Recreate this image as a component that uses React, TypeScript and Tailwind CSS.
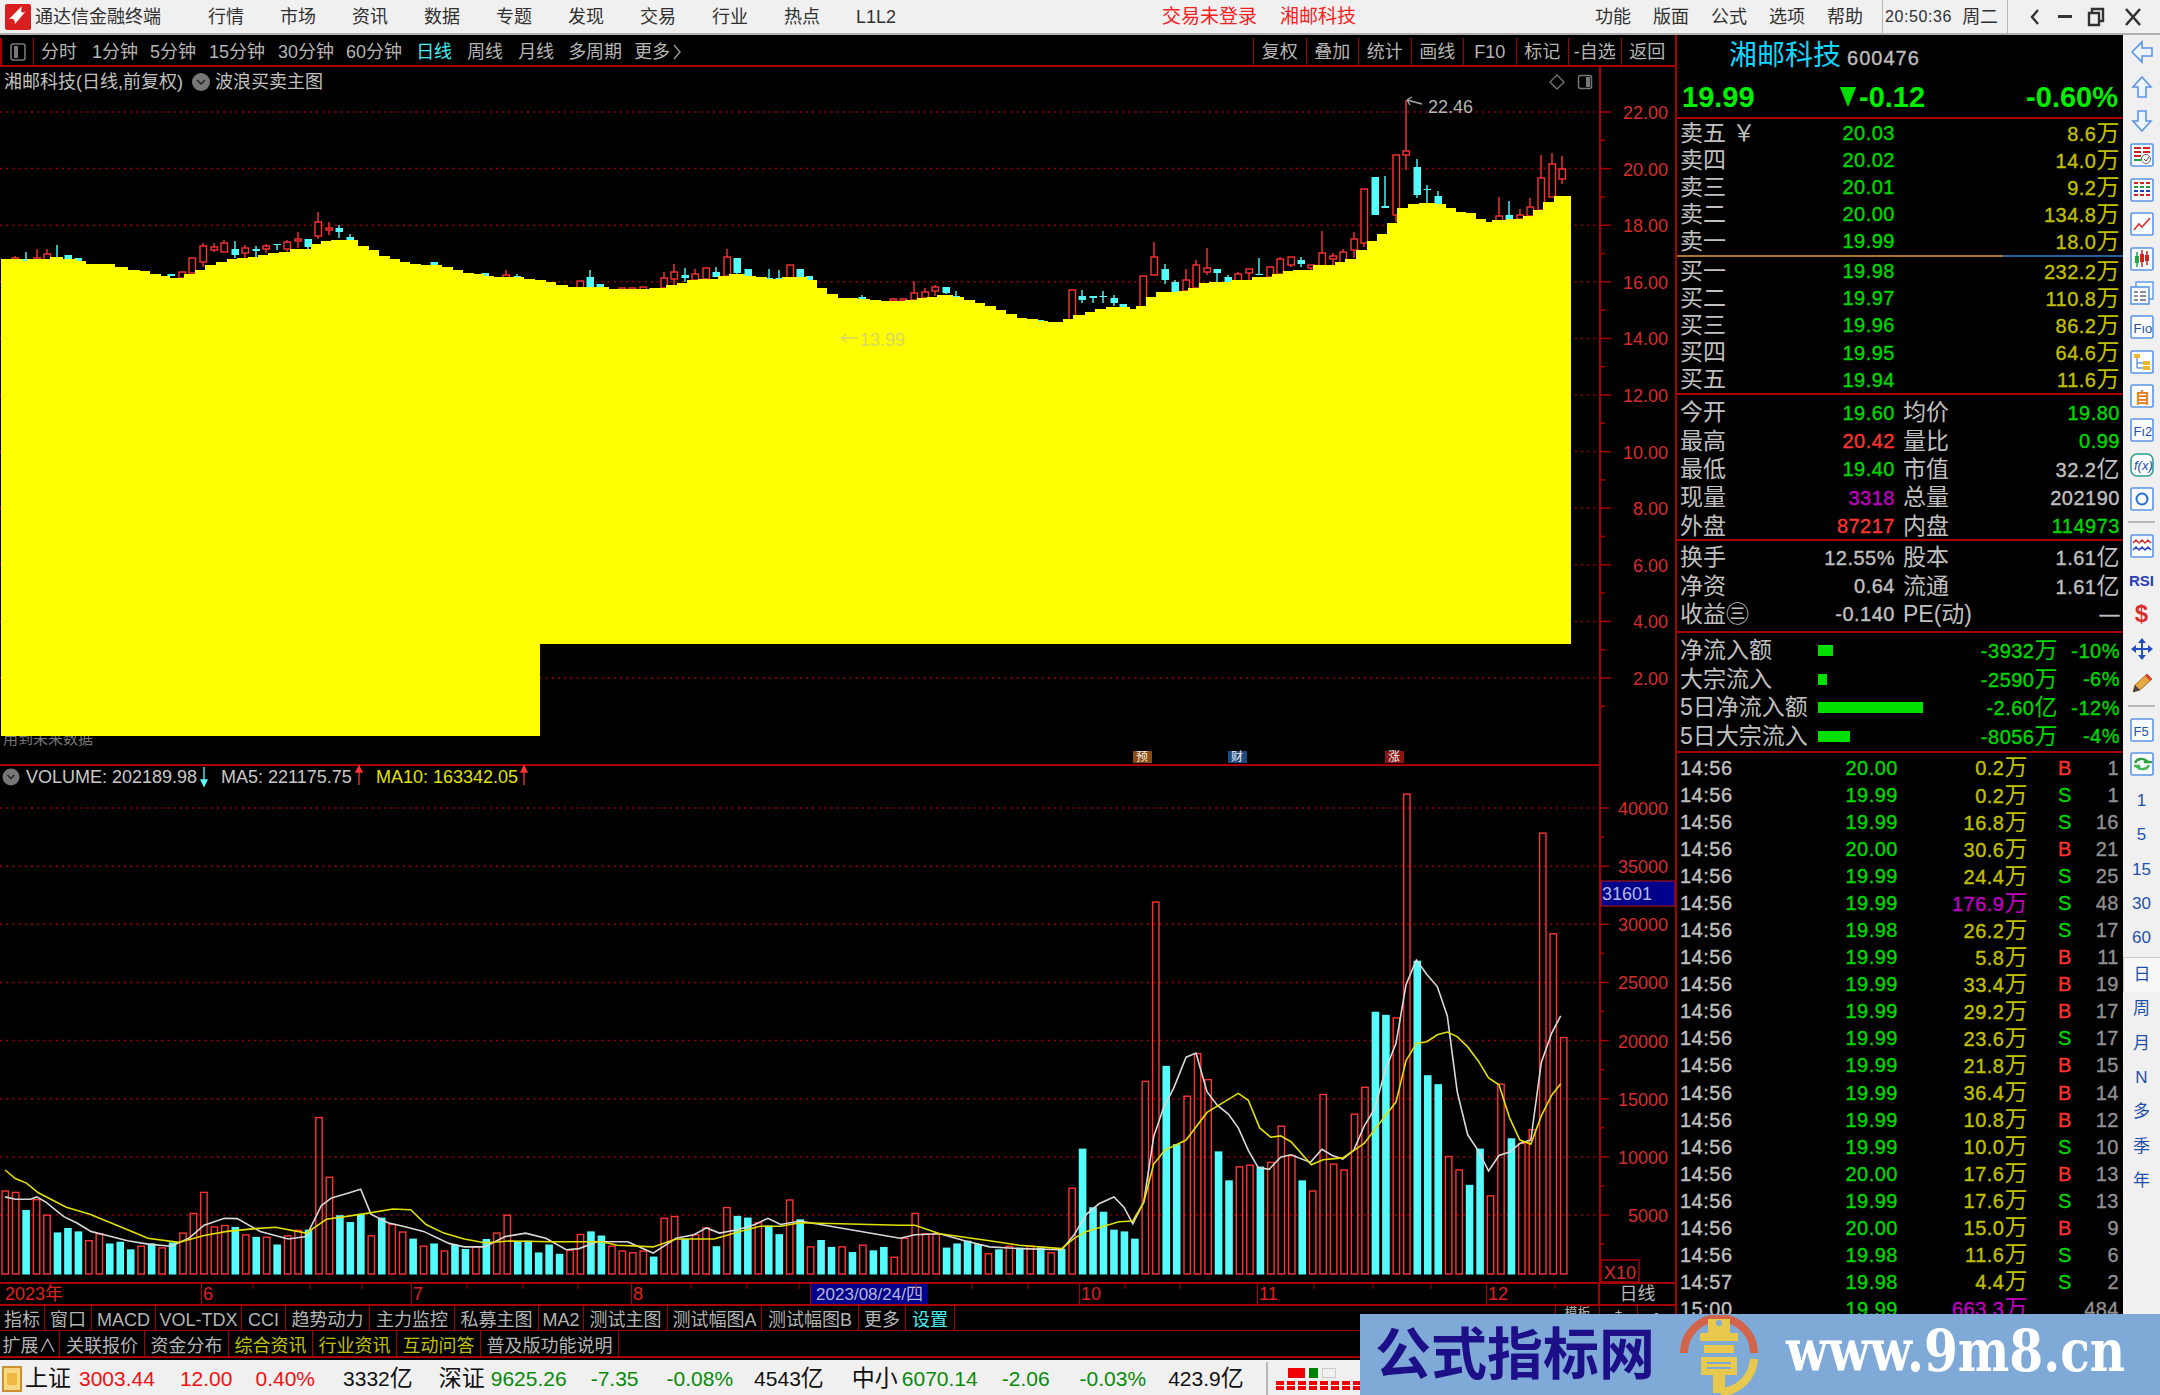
import React from "react";

const RED = "#a80000";

const steps: [number, number][] = [[23,259],[27,261],[50,259],[63,257],[77,259],[86,261],[115,264],[128,267],[140,270],[150,271],[161,274],[170,276],[184,278],[195,274],[205,270],[216,265],[227,262],[237,259],[248,258],[258,257],[268,255],[279,253],[290,252],[311,249],[321,244],[331,241],[358,240],[369,246],[379,250],[390,256],[400,259],[410,262],[421,264],[442,265],[453,267],[463,270],[474,273],[484,274],[494,276],[524,277],[535,279],[546,280],[556,282],[568,285],[609,287],[650,289],[666,288],[677,285],[687,283],[698,280],[718,279],[729,276],[745,274],[756,276],[767,277],[782,279],[808,277],[817,280],[827,288],[838,294],[858,298],[870,299],[881,300],[905,301],[917,300],[927,298],[937,297],[953,295],[964,297],[975,300],[985,303],[996,306],[1006,310],[1017,314],[1027,318],[1038,319],[1048,321],[1063,322],[1073,319],[1085,315],[1095,312],[1106,309],[1130,307],[1136,309],[1146,306],[1156,297],[1178,292],[1188,291],[1199,288],[1209,283],[1231,282],[1252,280],[1272,277],[1283,274],[1293,271],[1313,270],[1335,265],[1345,262],[1356,259],[1367,250],[1377,241],[1387,234],[1397,223],[1408,208],[1419,204],[1435,203],[1446,204],[1456,208],[1466,212],[1476,213],[1486,219],[1492,222],[1506,220],[1523,219],[1533,216],[1543,210],[1554,202],[1571,196]];

function yellowPoints() {
  let x = 1;
  const p: string[] = [];
  for (const [e, y] of steps) {
    p.push(`${x},${y}`, `${e},${y}`);
    x = e;
  }
  p.push("1571,644", "540,644", "540,736", "1,736");
  return p.join(" ");
}

const candles: [number, number, number, number, number, 0 | 1][] = [
[15,258,262,256,262,1],[26,259,261,252,261,0],[37,258,260,249,260,1],[47,254,260,249,260,1],[57,257,259,245,259,0],[68,255,260,255,260,0],[78,258,262,258,262,0],[111,264,266,264,266,0],[171,274,276,274,276,0],[182,272,278,272,278,1],[192,258,273,258,273,1],[203,246,262,243,267,1],[214,247,250,243,252,1],[224,243,252,240,252,1],[235,249,255,241,258,0],[245,248,253,245,258,1],[256,249,251,246,257,0],[266,246,249,244,253,1],[277,244,245,244,250,0],[287,242,249,240,257,1],[298,239,241,232,248,1],[308,239,247,239,249,0],[318,222,236,212,239,1],[329,228,230,222,235,1],[339,228,232,225,238,0],[350,237,240,234,240,0],[434,262,266,262,266,0],[485,273,276,273,276,0],[506,275,280,270,280,1],[517,276,278,274,278,0],[580,281,290,281,290,1],[590,277,287,270,287,0],[600,284,288,284,288,0],[622,288,290,288,290,1],[632,288,290,288,290,1],[643,287,291,287,291,1],[653,288,290,288,290,0],[664,278,288,272,288,1],[674,272,279,264,285,1],[685,275,278,268,282,0],[695,274,280,269,280,1],[706,268,279,268,279,1],[716,272,277,267,277,0],[727,257,276,249,276,1],[737,258,273,258,275,0],[748,269,276,269,276,0],[769,278,279,269,279,0],[779,278,279,270,279,0],[790,265,278,265,278,1],[800,269,278,269,278,0],[809,276,281,276,281,0],[862,297,299,295,299,0],[893,299,301,298,301,1],[903,299,301,298,301,1],[914,293,300,281,300,1],[925,292,298,288,298,1],[935,287,291,285,296,1],[946,287,293,287,294,0],[956,296,298,291,298,0],[1040,320,322,320,322,0],[1072,290,320,290,320,1],[1082,296,300,290,303,0],[1093,296,298,296,303,0],[1103,296,297,291,303,0],[1114,298,303,295,306,0],[1123,304,308,304,308,0],[1143,276,310,276,310,1],[1154,257,275,242,275,1],[1165,269,280,264,284,0],[1175,282,293,280,293,0],[1186,280,291,269,291,1],[1196,265,288,260,288,1],[1207,268,272,248,275,1],[1217,269,273,269,283,0],[1228,277,282,275,282,0],[1238,274,281,272,281,1],[1249,269,273,269,281,1],[1259,274,275,258,275,0],[1270,267,277,267,277,1],[1280,259,274,257,274,1],[1291,257,265,257,267,1],[1301,260,264,257,267,0],[1311,265,268,265,270,1],[1322,253,266,231,266,1],[1333,256,259,253,265,1],[1343,252,263,249,263,1],[1354,239,250,232,258,1],[1364,189,243,189,247,1],[1375,177,215,177,215,0],[1385,206,208,176,208,0],[1396,155,215,155,222,1],[1406,151,155,100,170,1],[1417,167,195,159,198,0],[1427,189,190,185,203,0],[1438,196,204,191,204,0],[1499,216,222,197,222,1],[1509,215,221,201,221,0],[1520,215,219,209,219,1],[1530,207,216,198,216,1],[1541,178,210,155,210,1],[1552,164,197,153,197,1],[1562,169,179,156,184,1]];

const vols: [number, 0 | 1][] = [
[1308,1],[1312,1],[1363,0],[1333,1],[1378,1],[1428,0],[1415,0],[1425,0],[1452,1],[1432,1],[1460,0],[1455,0],[1477,0],[1468,1],[1460,0],[1473,1],[1457,0],[1430,1],[1373,1],[1312,1],[1412,1],[1408,1],[1412,0],[1435,1],[1441,0],[1442,1],[1463,0],[1438,1],[1422,1],[1420,0],[1095,1],[1268,1],[1378,0],[1398,0],[1374,0],[1438,1],[1385,0],[1405,1],[1427,1],[1446,0],[1468,1],[1460,0],[1482,1],[1464,0],[1476,0],[1470,1],[1447,0],[1430,1],[1378,1],[1453,0],[1452,0],[1486,0],[1463,0],[1490,0],[1480,1],[1434,1],[1425,0],[1437,0],[1468,1],[1482,1],[1487,1],[1482,1],[1498,0],[1387,1],[1382,1],[1447,0],[1435,1],[1415,1],[1468,0],[1356,1],[1380,0],[1385,0],[1400,1],[1408,0],[1433,0],[1334,1],[1390,0],
[1470,1],[1450,0],[1470,0],[1470,1],[1485,0],[1465,1],[1480,0],[1470,0],[1500,1],
[1445,1],[1373,1],[1432,1],[1432,1],[1472,0],[1460,0],[1452,0],[1462,0],[1490,1],[1477,0],[1468,1],[1472,0],[1468,1],[1472,0],[1487,1],[1475,0],[1300,1],[1185,0],[1355,0],[1368,0],[1420,0],[1425,0],[1446,0],[990,1],[470,1],[945,0],[1172,0],[1033,1],[910,1],[985,1],[1193,0],[1277,0],[1238,1],[1233,1],[1237,0],[1225,1],[1120,1],[1205,1],[1277,0],[1308,1],[1028,1],[1230,1],[1247,1],[1085,1],[1007,1],[788,0],[797,0],[806,1],[157,1],[640,0],[972,0],[998,0],[1208,1],[1247,1],[1290,0],[1185,0],[1322,1],[998,1],[1155,0],[1170,1],[1130,1],[270,1],[562,1],[863,1]];

const w7 = [[10,1325],[30,1332],[60,1332],[72,1325],[90,1340],[125,1382],[150,1400],[178,1425],[210,1437],[250,1452],[290,1462],[335,1468],[370,1445],[400,1407],[440,1387],[465,1388],[510,1425],[565,1447],[600,1440],[630,1350],[650,1328],[680,1315],[707,1303],[727,1375],[760,1400],[790,1410],[830,1425],[880,1460],[910,1470],[950,1470],[990,1440],[1030,1430],[1070,1445],[1110,1478],[1135,1475],[1170,1455],[1230,1455],[1280,1488],[1325,1445],[1360,1435],[1385,1415],[1410,1430],[1445,1420],[1480,1405],[1505,1387],[1530,1405],[1568,1395]];
const y7 = [[10,1247],[30,1272],[52,1285],[75,1313],[130,1355],[175,1375],[250,1420],[290,1445],[350,1457],[400,1437],[445,1425],[500,1417],[540,1413],[600,1430],[640,1390],[710,1375],[770,1360],[805,1362],[835,1405],[870,1430],[910,1447],[950,1458],[1000,1453],[1080,1455],[1180,1455],[1210,1465],[1280,1470],[1325,1447],[1400,1447],[1450,1425],[1490,1410],[1530,1410],[1568,1400]];
const w8 = [[0,1445],[30,1435],[80,1432],[130,1452],[180,1470],[240,1475],[325,1478],[350,1435],[375,1375],[400,1345],[430,1325],[450,1355],[468,1403],[490,1340],[510,1150],[530,1065],[550,1010],[575,920],[595,908],[617,1020],[638,1060],[660,1085],[680,1125],[700,1190],[720,1240],[742,1245],[765,1210],[786,1203],[825,1225],[848,1187],[869,1205],[890,1215],[912,1190],[933,1120],[954,1070],[975,960],[997,880],[1017,710],[1038,638],[1059,680],[1080,715],[1100,800],[1120,1020],[1141,1145],[1162,1190],[1183,1250],[1204,1205],[1225,1195],[1246,1170],[1268,1160],[1289,935],[1310,850],[1328,800]];
const y8 = [[0,1407],[30,1407],[80,1432],[130,1442],[180,1452],[240,1465],[325,1475],[350,1445],[375,1425],[410,1410],[440,1397],[468,1395],[490,1340],[510,1230],[532,1190],[575,1160],[617,1080],[680,1025],[700,1045],[723,1125],[745,1152],[765,1148],[786,1165],[827,1232],[850,1217],[890,1212],[933,1170],[975,1090],[997,1050],[1017,930],[1038,880],[1059,875],[1080,855],[1100,847],[1120,860],[1141,890],[1162,930],[1183,980],[1204,1000],[1225,1095],[1246,1160],[1268,1172],[1289,1090],[1310,1030],[1328,997]];

const line = (a: number[][], b: number[][]) =>
  [...a.map(([x, y]) => `${(x / 1.96).toFixed(1)},${(740 + y / 2.9).toFixed(1)}`), ...b.map(([x, y]) => `${(900 + x / 2.01).toFixed(1)},${(740 + y / 2.9).toFixed(1)}`)].join(" ");

function ChartSvg() {
  const prices = [22, 20, 18, 16, 14, 12, 10, 8, 6, 4, 2];
  const pY = (p: number) => 112 + (22 - p) * 28.3;
  const volGrid = [40000, 35000, 30000, 25000, 20000, 15000, 10000, 5000];
  const vY = (i: number) => 808 + i * 58.15;
  return (
    <svg viewBox="0 67 1675 1215" className="block w-[1675px] h-[1215px]">
      {prices.map((p) => (
        <g key={p}>
          <line x1="0" x2="1600" y1={pY(p)} y2={pY(p)} stroke="#a00000" strokeWidth="1.5" strokeDasharray="2 4.2" />
          <line x1="1600" x2="1611" y1={pY(p)} y2={pY(p)} stroke={RED} strokeWidth="1.5" />
          <line x1="1600" x2="1605" y1={pY(p) + 28.3} y2={pY(p) + 28.3} stroke={RED} strokeWidth="1.5" />
          <text x="1668" y={pY(p) + 7} textAnchor="end" fontSize="18" fill="#d82c2c">{p.toFixed(2)}</text>
        </g>
      ))}
      <line x1="1600" x2="1600" y1="67" y2="1282" stroke={RED} strokeWidth="2" />
      <text x="3" y="744" fontSize="15" fill="#777">用到未来数据</text>
      {candles.map(([x, t, b, wt, wb, r], i) => {
        const c = r ? "#ff3232" : "#54fcfc";
        return (
          <g key={i}>
            <line x1={x} x2={x} y1={wt} y2={wb} stroke={c} strokeWidth="1.4" />
            {r ? (
              <rect x={x - 3} y={t} width="6.5" height={Math.max(b - t, 1)} fill="#000" stroke={c} strokeWidth="1.4" />
            ) : (
              <rect x={x - 3.5} y={t} width="7.5" height={Math.max(b - t, 1)} fill={c} />
            )}
          </g>
        );
      })}
      <polygon points={yellowPoints()} fill="#ffff00" />
      <text x="4" y="88" fontSize="18" fill="#c0c0c0">湘邮科技(日线,前复权)</text>
      <circle cx="201" cy="82" r="9" fill="#777" />
      <path d="M197 80l4 4 4-4" fill="none" stroke="#222" strokeWidth="1.5" />
      <text x="215" y="88" fontSize="18" fill="#c0c0c0">波浪买卖主图</text>
      <path d="M1557 75l7 7-7 7-7-7z" fill="none" stroke="#777" strokeWidth="1.3" />
      <rect x="1578.5" y="75.5" width="13" height="13" rx="2" fill="none" stroke="#777" strokeWidth="1.5" />
      <rect x="1586" y="77" width="4" height="10" fill="#777" />
      <path d="M1422 104l-15-4m0 0l5-3m-5 3l3 5" fill="none" stroke="#aaa" strokeWidth="1.3" />
      <text x="1428" y="113" fontSize="18" fill="#b4b4b4">22.46</text>
      <path d="M858 338h-17m0 0l6-4m-6 4l6 4" fill="none" stroke="#d8d864" strokeWidth="1.5" />
      <text x="860" y="346" fontSize="18" fill="#d8d864">13.99</text>

      <rect x="1133" y="751" width="19" height="12" fill="#8b4a10" />
      <text x="1136" y="761" fontSize="12" fill="#eee">预</text>
      <rect x="1228" y="751" width="19" height="12" fill="#1f4a80" />
      <text x="1231" y="761" fontSize="12" fill="#eee">财</text>
      <rect x="1385" y="751" width="19" height="12" fill="#8b1414" />
      <text x="1388" y="761" fontSize="12" fill="#eee">涨</text>
      <line x1="0" x2="1600" y1="765" y2="765" stroke={RED} strokeWidth="2" />

      <circle cx="11" cy="777" r="8.5" fill="#777" />
      <path d="M7.5 775l3.5 3.5 3.5-3.5" fill="none" stroke="#222" strokeWidth="1.5" />
      <text x="26" y="783" fontSize="18" fill="#c8c8c8">VOLUME: 202189.98</text>
      <path d="M204 767v18m-3-5l3 6 3-6z" stroke="#54fcfc" fill="#54fcfc" strokeWidth="1.3" />
      <text x="221" y="783" fontSize="18" fill="#c8c8c8">MA5: 221175.75</text>
      <path d="M359 785v-18m-3 5l3-6 3 6z" stroke="#ff3232" fill="#ff3232" strokeWidth="1.3" />
      <text x="376" y="783" fontSize="18" fill="#e0e000">MA10: 163342.05</text>
      <path d="M524 785v-18m-3 5l3-6 3 6z" stroke="#ff3232" fill="#ff3232" strokeWidth="1.3" />

      {volGrid.map((v, i) => (
        <g key={v}>
          <line x1="0" x2="1600" y1={vY(i)} y2={vY(i)} stroke="#a00000" strokeWidth="1.5" strokeDasharray="2 4.2" />
          <line x1="1600" x2="1609" y1={vY(i)} y2={vY(i)} stroke={RED} strokeWidth="1.5" />
          <line x1="1600" x2="1604" y1={vY(i) + 29} y2={vY(i) + 29} stroke={RED} strokeWidth="1.5" />
          <text x="1668" y={vY(i) + 7} textAnchor="end" fontSize="18" fill="#d82c2c">{v}</text>
        </g>
      ))}
      {vols.map(([t, r], i) => {
        const x = 5 + 10.46 * i;
        const y = 740 + t / 2.9;
        return r ? (
          <rect key={i} x={x - 3} y={y} width="6.4" height={1274 - y} fill="none" stroke="#ff3232" strokeWidth="1.4" />
        ) : (
          <rect key={i} x={x - 3.6} y={y} width="7.6" height={1274.5 - y} fill="#54fcfc" />
        );
      })}
      <polyline points={line(w7, w8)} fill="none" stroke="#d8d8d8" strokeWidth="1.6" />
      <polyline points={line(y7, y8)} fill="none" stroke="#e0e000" strokeWidth="1.6" />

      <rect x="1601" y="881" width="74" height="25" fill="#00008b" stroke="#c01818" strokeWidth="1" />
      <text x="1602" y="900" fontSize="18" fill="#b8b8e8">31601</text>
      <rect x="1601" y="1260" width="38" height="22" fill="#000" stroke={RED} strokeWidth="1.5" />
      <text x="1604" y="1279" fontSize="18" fill="#d82c2c">X10</text>
    </svg>
  );
}

const navItems = ["行情", "市场", "资讯", "数据", "专题", "发现", "交易", "行业", "热点", "L1L2"];

function TopBar() {
  return (
    <div className="flex items-center h-[35px] bg-[#f0f0f0] border-b-2 border-b-[#b0b0b0] text-[18px] text-[#303030] shrink-0">
      <svg viewBox="0 0 26 26" className="w-[26px] h-[26px] ml-[5px] shrink-0">
        <rect width="26" height="26" rx="2" fill="#d81e1e" />
        <path d="M17 2L4 15c4-1 6 0 6 5l11-13c-4 3-6 2-4-5z" fill="#fff" />
      </svg>
      <span className="ml-[4px] w-[127px]">通达信金融终端</span>
      <div className="ml-[46px] flex gap-[36px]">
        {navItems.map((n) => (
          <span key={n} className="w-[36px] whitespace-nowrap">{n}</span>
        ))}
      </div>
      <span className="ml-[270px] text-[#f52020] text-[19px]">交易未登录</span>
      <span className="ml-[23px] text-[#f52020] text-[19px]">湘邮科技</span>
      <span className="ml-[239px]">功能</span>
      <span className="ml-[22px]">版面</span>
      <span className="ml-[22px]">公式</span>
      <span className="ml-[22px]">选项</span>
      <span className="ml-[22px]">帮助</span>
      <div className="ml-[19px] h-[33px] border-l border-l-[#b8b8b8] pl-[2px] flex items-center w-[125px]">
        <span className="text-[16px] tracking-[0.6px]">20:50:36</span>
        <span className="ml-[10px]">周二</span>
      </div>
      <div className="h-[33px] border-l border-l-[#b8b8b8] flex items-center">
        <svg viewBox="0 0 20 20" className="w-[20px] h-[20px] ml-[17px]"><path d="M13 3L7 10l6 7" fill="none" stroke="#333" strokeWidth="2.4" /></svg>
        <div className="w-[14px] h-[3px] bg-[#333] ml-[13px]" />
        <svg viewBox="0 0 20 20" className="w-[20px] h-[20px] ml-[14px]"><path d="M6 5V2h11v12h-3M3 6h10v12H3z" fill="none" stroke="#333" strokeWidth="2.4" /></svg>
        <svg viewBox="0 0 20 20" className="w-[20px] h-[20px] ml-[17px]"><path d="M3 2l14 16M17 2L3 18" fill="none" stroke="#333" strokeWidth="2.6" /></svg>
      </div>
    </div>
  );
}

const periods = [
  { t: "分时", c: "ml-[7px]" },
  { t: "1分钟", c: "ml-[15px]" },
  { t: "5分钟", c: "ml-[12px]" },
  { t: "15分钟", c: "ml-[13px]" },
  { t: "30分钟", c: "ml-[13px]" },
  { t: "60分钟", c: "ml-[12px]" },
  { t: "日线", c: "ml-[14px] text-[#40f0f0]" },
  { t: "周线", c: "ml-[15px]" },
  { t: "月线", c: "ml-[15px]" },
  { t: "多周期", c: "ml-[14px]" },
  { t: "更多", c: "ml-[12px]" },
];
const rightBtns = ["复权", "叠加", "统计", "画线", "F10", "标记", "-自选", "返回"];

function Toolbar() {
  return (
    <div className="flex items-center h-[32px] pt-[3px] border-b-2 border-b-[#a80000] text-[18px] text-[#b4b4b4] shrink-0">
      <div className="w-[34px] h-full border-l-2 border-l-[#a80000] border-r border-r-[#a80000] flex items-center justify-center">
        <svg viewBox="0 0 16 18" className="w-[16px] h-[18px]"><rect x="1" y="1" width="14" height="16" rx="2" fill="none" stroke="#777" strokeWidth="1.6" /><rect x="4" y="3" width="4" height="12" fill="#777" /></svg>
      </div>
      {periods.map((p) => (
        <span key={p.t} className={p.c + " whitespace-nowrap"}>{p.t}</span>
      ))}
      <svg viewBox="0 0 10 18" className="w-[10px] h-[18px] ml-[2px]"><path d="M2 2l6 7-6 7" fill="none" stroke="#999" strokeWidth="1.4" /></svg>
      <div className="ml-auto mr-[2px] flex h-full">
        {rightBtns.map((b) => (
          <span key={b} className="w-[52.5px] h-full border-l border-l-[#a80000] flex items-center justify-center whitespace-nowrap">{b}</span>
        ))}
      </div>
    </div>
  );
}

function DateRow() {
  const ticks = [253, 310, 362, 467, 523, 578, 691, 747, 799, 916, 972, 1028, 1125, 1180, 1314, 1373, 1431, 1555];
  return (
    <div className="relative flex h-[24px] border-y-2 border-y-[#a80000] text-[18px] text-[#e02020] shrink-0 box-border">
      <svg viewBox="0 0 1600 6" className="absolute left-0 top-0 w-[1600px] h-[6px]">
        {ticks.map((t) => <line key={t} x1={t} x2={t} y1="0" y2="5" stroke={RED} strokeWidth="1" />)}
      </svg>
      <div className="w-[202px] pl-[5px] leading-[21px] border-r border-r-[#a80000]">2023年</div>
      <div className="w-[210px] pl-[1px] leading-[21px] border-r border-r-[#a80000]">6</div>
      <div className="w-[220px] pl-[1px] leading-[21px] border-r border-r-[#a80000]">7</div>
      <div className="w-[179px] pl-[1px] leading-[21px] border-r border-r-[#a80000]">8</div>
      <div className="w-[117px] leading-[21px] bg-[#00008b] text-[#b8b8d8] text-[17px] whitespace-nowrap text-center">2023/08/24/四</div>
      <div className="w-[152px] border-r border-r-[#a80000]" />
      <div className="w-[178px] pl-[1px] leading-[21px] border-r border-r-[#a80000]">10</div>
      <div className="w-[229px] pl-[1px] leading-[21px] border-r border-r-[#a80000]">11</div>
      <div className="w-[113px] pl-[1px] leading-[21px] border-r-2 border-r-[#a80000]">12</div>
      <div className="w-[75px] leading-[21px] text-center text-[#b4b4b4]">日线</div>
    </div>
  );
}

const tabs1 = [
  { t: "指标", c: "w-[45px]" }, { t: "窗口", c: "w-[47px]" }, { t: "MACD", c: "w-[64px]" }, { t: "VOL-TDX", c: "w-[86px]" }, { t: "CCI", c: "w-[44px]" },
  { t: "趋势动力", c: "w-[84px]" }, { t: "主力监控", c: "w-[85px]" }, { t: "私募主图", c: "w-[84px]" }, { t: "MA2", c: "w-[45px]" }, { t: "测试主图", c: "w-[84px]" },
  { t: "测试幅图A", c: "w-[94px]" }, { t: "测试幅图B", c: "w-[97px]" }, { t: "更多", c: "w-[47px]" }, { t: "设置", c: "w-[49px] text-[#40f0f0]" },
];
const tabs2 = [
  { t: "扩展∧", c: "w-[60px]" }, { t: "关联报价", c: "w-[85px]" }, { t: "资金分布", c: "w-[84px]" }, { t: "综合资讯", c: "w-[84px] text-[#c0c000]" },
  { t: "行业资讯", c: "w-[84px] text-[#c0c000]" }, { t: "互动问答", c: "w-[84px] text-[#c0c000]" }, { t: "普及版功能说明", c: "w-[138px]" },
];

function Tabs() {
  return (
    <div className="text-[18px] text-[#b4b4b4] shrink-0">
      <div className="flex h-[25px] border-b border-b-[#a80000]">
        {tabs1.map((t) => (
          <span key={t.t} className={t.c + " border-r border-r-[#a80000] flex items-center justify-center whitespace-nowrap pt-[4px]"}>{t.t}</span>
        ))}
        <span className="ml-auto w-[45px] border-x border-x-[#a80000] flex items-start justify-center text-[13px]">模板</span>
        <span className="w-[38px] border-r border-r-[#a80000] flex items-start justify-center text-[13px]">+</span>
        <span className="w-[37px] flex items-start justify-center text-[13px]">-</span>
      </div>
      <div className="flex h-[27px] border-b-2 border-b-[#a80000]">
        {tabs2.map((t) => (
          <span key={t.t} className={t.c + " border-r border-r-[#a80000] flex items-center justify-center whitespace-nowrap pt-[5px]"}>{t.t}</span>
        ))}
      </div>
    </div>
  );
}

const G = "text-[#00d800]";
const Y = "text-[#c0c000]";
const W = "text-[#c0c0c0]";
const R = "text-[#ff3232]";
const M = "text-[#c000c0]";

const NUM = "text-[20px] tracking-[0.5px] [-webkit-text-stroke:0.35px_currentColor]";
const UNIT = "text-[23px] [-webkit-text-stroke:0]";

function QuoteRow({ l, p, v, h }: { l: string; p: string; v: string; h: string }) {
  return (
    <div className={"grid grid-cols-[100px_118px_1fr] items-center " + h}>
      <span className={"pl-[3px] text-[23px] " + W + " whitespace-nowrap"}>{l}</span>
      <span className={"text-right " + NUM + " " + G}>{p}</span>
      <span className={"text-right pr-[3px] " + NUM + " " + Y}>{v.slice(0, -1)}<span className={UNIT}>{v.slice(-1)}</span></span>
    </div>
  );
}

function StatRow({ l, v, vc, l2, r, rc }: { l: string; v: string; vc: string; l2: string; r: string; rc: string }) {
  const unit = /[亿]$/.test(r);
  return (
    <div className="grid grid-cols-[100px_118px_8px_96px_1fr] items-center h-[28.4px]">
      <span className={"pl-[3px] text-[23px] whitespace-nowrap " + W}>{l}</span>
      <span className={"text-right " + NUM + " " + vc}>{v}</span>
      <span />
      <span className={"text-[23px] whitespace-nowrap " + W}>{l2}</span>
      <span className={"text-right pr-[3px] " + NUM + " " + rc}>
        {unit ? r.slice(0, -1) : r}
        {unit && <span className={UNIT}>亿</span>}
      </span>
    </div>
  );
}

function FlowRow({ l, bar, v, u, p }: { l: string; bar: string; v: string; u: string; p: string }) {
  return (
    <div className="grid grid-cols-[141px_130px_110px_1fr] items-center h-[28.5px]">
      <span className={"pl-[3px] text-[23px] whitespace-nowrap " + W}>{l}</span>
      <span className="flex items-center"><span className={"h-[11px] bg-[#00e000] " + bar} /></span>
      <span className={"text-right whitespace-nowrap " + NUM + " " + G}>{v}<span className={UNIT}>{u}</span></span>
      <span className={"text-right pr-[3px] " + NUM + " " + G}>{p}</span>
    </div>
  );
}

const ticks: [string, string, string, string, string, string][] = [
  ["14:56","20.00","0.2","","B","1"],["14:56","19.99","0.2","","S","1"],["14:56","19.99","16.8","","S","16"],["14:56","20.00","30.6","","B","21"],["14:56","19.99","24.4","","S","25"],["14:56","19.99","176.9","m","S","48"],["14:56","19.98","26.2","","S","17"],["14:56","19.99","5.8","","B","11"],["14:56","19.99","33.4","","B","19"],["14:56","19.99","29.2","","B","17"],["14:56","19.99","23.6","","S","17"],["14:56","19.99","21.8","","B","15"],["14:56","19.99","36.4","","B","14"],["14:56","19.99","10.8","","B","12"],["14:56","19.99","10.0","","S","10"],["14:56","20.00","17.6","","B","13"],["14:56","19.99","17.6","","S","13"],["14:56","20.00","15.0","","B","9"],["14:56","19.98","11.6","","S","6"],["14:57","19.98","4.4","","S","2"],["15:00","19.99","663.3","m","","484"],
];

function RightPanel() {
  return (
    <div className="w-[448px] h-full border-l-2 border-l-[#a80000] overflow-hidden flex flex-col shrink-0">
      <div className="h-[39px] flex items-end pl-[52px] shrink-0">
        <span className="text-[28px] leading-[36px] text-[#12d6ff] whitespace-nowrap">湘邮科技</span>
        <span className="ml-[6px] text-[20px] tracking-[1px] leading-[32px] text-[#bdbdbd] [-webkit-text-stroke:0.35px_currentColor]">600476</span>
      </div>
      <div className="h-[44.5px] pt-[4px] flex items-center border-b-2 border-b-[#a80000] text-[29px] font-bold text-[#00f000] shrink-0">
        <span className="ml-[5px] w-[100px]">19.99</span>
        <svg viewBox="0 0 20 24" className="w-[20px] h-[22px] ml-[56px]"><path d="M1 1h18L10 23z" fill="#00e000" /></svg>
        <span className="ml-[1px]">-0.12</span>
        <span className="ml-auto mr-[5px]">-0.60%</span>
      </div>
      <div className="pt-[1px]">
        <QuoteRow h="h-[27px]" l="卖五 ￥" p="20.03" v="8.6万" />
        <QuoteRow h="h-[27px]" l="卖四" p="20.02" v="14.0万" />
        <QuoteRow h="h-[27px]" l="卖三" p="20.01" v="9.2万" />
        <QuoteRow h="h-[27px]" l="卖二" p="20.00" v="134.8万" />
        <QuoteRow h="h-[27px]" l="卖一" p="19.99" v="18.0万" />
      </div>
      <div className="flex h-[2px] shrink-0 my-[0.5px]"><div className="w-[326px] bg-[#a87830]" /><div className="flex-1 bg-[#28609a]" /></div>
      <div>
        <QuoteRow h="h-[27.2px]" l="买一" p="19.98" v="232.2万" />
        <QuoteRow h="h-[27.2px]" l="买二" p="19.97" v="110.8万" />
        <QuoteRow h="h-[27.2px]" l="买三" p="19.96" v="86.2万" />
        <QuoteRow h="h-[27.2px]" l="买四" p="19.95" v="64.6万" />
        <QuoteRow h="h-[27.2px]" l="买五" p="19.94" v="11.6万" />
      </div>
      <div className="border-t-2 border-t-[#a80000] h-[146px] pt-[3px] shrink-0">
        <StatRow l="今开" v="19.60" vc={G} l2="均价" r="19.80" rc={G} />
        <StatRow l="最高" v="20.42" vc={R} l2="量比" r="0.99" rc={G} />
        <StatRow l="最低" v="19.40" vc={G} l2="市值" r="32.2亿" rc={W} />
        <StatRow l="现量" v="3318" vc={M} l2="总量" r="202190" rc={W} />
        <StatRow l="外盘" v="87217" vc={R} l2="内盘" r="114973" rc={G} />
      </div>
      <div className="border-t-2 border-t-[#a80000] h-[92px] pt-[2px] shrink-0">
        <StatRow l="换手" v="12.55%" vc={W} l2="股本" r="1.61亿" rc={W} />
        <StatRow l="净资" v="0.64" vc={W} l2="流通" r="1.61亿" rc={W} />
        <StatRow l="收益㊂" v="-0.140" vc={W} l2="PE(动)" r="—" rc={W} />
      </div>
      <div className="border-t-2 border-t-[#a80000] h-[120px] pt-[3px] shrink-0">
        <FlowRow l="净流入额" bar="w-[15px]" v="-3932" u="万" p="-10%" />
        <FlowRow l="大宗流入" bar="w-[9px]" v="-2590" u="万" p="-6%" />
        <FlowRow l="5日净流入额" bar="w-[105px]" v="-2.60" u="亿" p="-12%" />
        <FlowRow l="5日大宗流入" bar="w-[32px]" v="-8056" u="万" p="-4%" />
      </div>
      <div className="border-t-2 border-t-[#a80000] pt-[1px]">
        {ticks.map((t, i) => (
          <div key={i} className="grid grid-cols-[100px_121px_130px_50px_1fr] items-center h-[27.05px]">
            <span className={"pl-[3px] " + NUM + " " + W}>{t[0]}</span>
            <span className={"text-right " + NUM + " " + G}>{t[1]}</span>
            <span className={"text-right " + NUM + " " + (t[3] ? M : Y)}>{t[2]}<span className={UNIT}>万</span></span>
            <span className={"pl-[30px] text-[20px] [-webkit-text-stroke:0.3px_currentColor] " + (t[4] === "B" ? R : G)}>{t[4]}</span>
            <span className={"text-right pr-[4px] text-[#909090] " + NUM}>{t[5]}</span>
          </div>
        ))}
      </div>
    </div>
  );
}

function Box({ children }: { children: React.ReactNode }) {
  return (
    <svg viewBox="0 0 24 24" className="w-[24px] h-[24px]">
      <rect x="1" y="1" width="22" height="22" rx="1.5" fill="#fbfdff" stroke="#5a94e8" strokeWidth="1.6" />
      {children}
    </svg>
  );
}

function SideIcons() {
  const cell = "h-[34.4px] flex items-center justify-center shrink-0";
  const label = cell + " text-[17px] text-[#1f4fa8]";
  const sep = "h-[12px] flex items-center shrink-0 px-[5px]";
  const arrowProps = { fill: "#eef5ff", stroke: "#5a94e8", strokeWidth: 1.6 };
  return (
    <div className="w-[37px] h-full bg-[#f0f0f0] flex flex-col shrink-0">
      <div className={cell}><svg viewBox="0 0 24 24" className="w-[24px] h-[24px]"><path d="M2 12l10-10v6h10v8H12v6z" {...arrowProps} /></svg></div>
      <div className={cell}><svg viewBox="0 0 24 24" className="w-[24px] h-[24px]"><path d="M12 2l9 10h-5v10H8V12H3z" {...arrowProps} /></svg></div>
      <div className={cell}><svg viewBox="0 0 24 24" className="w-[24px] h-[24px]"><path d="M12 22l9-10h-5V2H8v10H3z" {...arrowProps} /></svg></div>
      <div className={cell}><Box><path d="M4 5h7M13 5h7M4 9h7M13 9h7M4 13h7" stroke="#d02020" strokeWidth="2" /><path d="M4 17h7" stroke="#20a040" strokeWidth="2" /><circle cx="16" cy="16" r="4.5" fill="#fff" stroke="#666" /><path d="M14 16l2 2 3-4" fill="none" stroke="#444" /></Box></div>
      <div className={cell}><Box><path d="M4 5h4M10 5h4M16 5h4" stroke="#d02020" strokeWidth="2" /><path d="M4 9h4M10 9h4M16 9h4" stroke="#20a040" strokeWidth="2" /><path d="M4 13h4M10 13h4M16 13h4" stroke="#2040c0" strokeWidth="2" /><path d="M4 17h4M10 17h4M16 17h4" stroke="#d02020" strokeWidth="2" /></Box></div>
      <div className={cell}><Box><path d="M4 18l5-6 3 3 8-9" fill="none" stroke="#d83030" strokeWidth="1.6" /></Box></div>
      <div className={cell}><Box><path d="M7 5v15M7 9h0" stroke="#20a040" strokeWidth="1.5" /><rect x="5" y="9" width="4" height="7" fill="#20a040" /><path d="M12 3v17" stroke="#d02020" strokeWidth="1.5" /><rect x="10" y="7" width="4" height="8" fill="#d02020" /><path d="M17 4v14" stroke="#d02020" strokeWidth="1.5" /><rect x="15" y="8" width="4" height="6" fill="#d02020" /></Box></div>
      <div className={cell}><svg viewBox="0 0 24 24" className="w-[24px] h-[24px]"><rect x="6" y="1" width="17" height="17" fill="#fbfdff" stroke="#5a94e8" strokeWidth="1.4" /><rect x="1" y="6" width="18" height="17" fill="#fbfdff" stroke="#5a94e8" strokeWidth="1.6" /><path d="M4 11h4M10 11h6M4 15h4M10 15h6M4 19h4M10 19h6" stroke="#667" strokeWidth="1.5" /></svg></div>
      <div className={cell}><Box><text x="3.5" y="18" fontSize="13" fill="#1f4fa8">Fıo</text></Box></div>
      <div className={cell}><Box><rect x="4" y="4" width="6" height="4" fill="#e8b830" /><path d="M7 8v10h6M7 13h6" stroke="#3070c0" fill="none" /><rect x="13" y="11" width="7" height="4" fill="#e8b830" /><rect x="13" y="16" width="7" height="4" fill="#e8b830" /></Box></div>
      <div className={cell}><Box><text x="5" y="18.5" fontSize="15" fontWeight="bold" fill="#e08020">自</text></Box></div>
      <div className={cell}><Box><text x="3.5" y="18" fontSize="13" fill="#1f4fa8">Fı2</text></Box></div>
      <div className={cell}><svg viewBox="0 0 24 24" className="w-[24px] h-[24px]"><rect x="1" y="1" width="22" height="22" rx="6" fill="#fbfdff" stroke="#30a090" strokeWidth="1.6" /><text x="4" y="17" fontSize="13" fontStyle="italic" fill="#1f4fa8">f(x)</text></svg></div>
      <div className={cell}><Box><circle cx="12" cy="12" r="5.5" fill="none" stroke="#2070d0" strokeWidth="2" /></Box></div>
      <div className={sep}><div className="w-full h-[2px] bg-[#b8b8b8]" /></div>
      <div className={cell}><Box><path d="M3 9l3-3 3 3 3-3 3 3 3-3 3 3" fill="none" stroke="#d83030" strokeWidth="1.5" /><path d="M3 16l3-3 3 3 3-3 3 3 3-3 3 3" fill="none" stroke="#2040d0" strokeWidth="1.5" /></Box></div>
      <div className={cell + " text-[15px] font-bold text-[#2840b8]"}>RSI</div>
      <div className={cell + " text-[24px] font-bold text-[#d83030]"}>$</div>
      <div className={cell}><svg viewBox="0 0 24 24" className="w-[24px] h-[24px]"><path d="M12 1l4 5h-3v5h5V8l5 4-5 4v-3h-5v5h3l-4 5-4-5h3v-5H6v3l-5-4 5-4v3h5V6H8z" fill="#1f4fc0" /></svg></div>
      <div className={cell}><svg viewBox="0 0 24 24" className="w-[24px] h-[24px]"><path d="M3 21l2-7L17 3l5 5L10 19z" fill="#e8a840" stroke="#a07030" /><path d="M3 21l2-7 5 5z" fill="#444" /><path d="M17 3l5 5-2 2-5-5z" fill="#e04030" /></svg></div>
      <div className={sep}><div className="w-full h-[2px] bg-[#b8b8b8]" /></div>
      <div className={cell}><Box><text x="3.5" y="18" fontSize="13" fill="#1f4fa8">F5</text></Box></div>
      <div className={cell}><Box><path d="M5 11a7 6 0 0 1 12-2l-3 1h7v-1" fill="none" stroke="#30a040" strokeWidth="2.4" /><path d="M19 13a7 6 0 0 1-12 2l3-1H4" fill="none" stroke="#40b858" strokeWidth="2.4" /></Box></div>
      <div className="h-[2px] shrink-0" />
      {["1", "5", "15", "30", "60"].map((n) => <div key={n} className={label}>{n}</div>)}
      <div className="h-[2px] shrink-0" />
      <div className={label + " bg-[#f8f8f8] border-t border-l border-[#c8c8c8]"}>日</div>
      {["周", "月", "N", "多", "季", "年"].map((n) => <div key={n} className={label}>{n}</div>)}
    </div>
  );
}

function StatusBar() {
  const b = "whitespace-nowrap";
  return (
    <div className="h-[35px] pt-[2px] bg-[#f0f0f0] flex items-center text-[21px] shrink-0 text-[#101010]">
      <svg viewBox="0 0 20 28" className="ml-[2px] w-[20px] h-[28px] shrink-0"><rect x="1" y="2" width="18" height="24" fill="#f8d880" stroke="#c89030" strokeWidth="2" /><rect x="5" y="8" width="10" height="12" fill="#f0b840" /></svg>
      <span className={"ml-[3px] text-[23px] " + b}>上证</span>
      <span className={"ml-[8px] text-[#f01010] " + b}>3003.44</span>
      <span className={"ml-[25px] text-[#f01010] " + b}>12.00</span>
      <span className={"ml-[23px] text-[#f01010] " + b}>0.40%</span>
      <span className={"ml-[28px] " + b}>3332<span className="text-[23px]">亿</span></span>
      <span className={"ml-[26px] text-[23px] " + b}>深证</span>
      <span className={"ml-[6px] text-[#088a08] " + b}>9625.26</span>
      <span className={"ml-[24px] text-[#088a08] " + b}>-7.35</span>
      <span className={"ml-[28px] text-[#088a08] " + b}>-0.08%</span>
      <span className={"ml-[21px] " + b}>4543<span className="text-[23px]">亿</span></span>
      <span className={"ml-[28px] text-[23px] " + b}>中小</span>
      <span className={"ml-[4px] text-[#088a08] " + b}>6070.14</span>
      <span className={"ml-[24px] text-[#088a08] " + b}>-2.06</span>
      <span className={"ml-[30px] text-[#088a08] " + b}>-0.03%</span>
      <span className={"ml-[22px] " + b}>423.9<span className="text-[23px]">亿</span></span>
      <div className="ml-[22px] h-[33px] border-l-2 border-l-[#b8b8b8] pl-[8px] flex flex-col justify-center gap-[1px]">
        <div className="flex gap-[4px] items-center ml-[12px] mb-[2px]">
          <span className="w-[17px] h-[10px] bg-[#f00000]" />
          <span className="w-[9px] h-[10px] bg-[#008000]" />
          <span className="w-[14px] h-[10px] border border-[#ccc]" />
        </div>
        {[0, 1].map((r) => (
          <div key={r} className="flex gap-[3px]">
            {[0, 1, 2, 3, 4, 5, 6, 7].map((i) => <span key={i} className="w-[8px] h-[4px] bg-[#f00000]" />)}
          </div>
        ))}
      </div>
    </div>
  );
}

function Watermark() {
  return (
    <div className="absolute left-[1360px] top-[1314px] w-[800px] h-[81px] bg-[#7faad8] flex items-center overflow-hidden">
      <span className="ml-[15px] text-[56px] font-bold leading-none text-[#1c0f88] whitespace-nowrap">公式指标网</span>
      <svg viewBox="0 0 80 80" className="w-[80px] h-[80px] ml-[24px] shrink-0">
        <path d="M5 38A35 35 0 0 1 75 38" fill="none" stroke="#d2644c" strokeWidth="8" />
        <path d="M75 44A35 35 0 0 1 42 77" fill="none" stroke="#e8c94e" strokeWidth="8" />
        <path d="M29 4h22v14h8v8H21v-8h8zM25 30h30v8H25zM22 42h36v18H46v18H34V60H22z" fill="#e8c94e" />
        <circle cx="40" cy="8" r="3" fill="#7faad8" />
        <path d="M28 48h24M28 53h24" stroke="#7faad8" strokeWidth="2" />
      </svg>
      <span className="ml-[27px] font-['DejaVu_Serif',serif] text-[58px] font-bold leading-none text-white whitespace-nowrap origin-left scale-x-[0.84] -translate-y-[4px]">www.9m8.cn</span>
    </div>
  );
}

export default function App() {
  return (
    <div className="relative w-[2160px] h-[1395px] bg-black overflow-hidden flex flex-col leading-none font-['Liberation_Sans','Noto_Sans_CJK_SC',sans-serif]">
      <TopBar />
      <div className="flex h-[1325px] shrink-0">
        <div className="w-[1675px] flex flex-col shrink-0">
          <Toolbar />
          <ChartSvg />
          <DateRow />
          <Tabs />
        </div>
        <RightPanel />
        <SideIcons />
      </div>
      <StatusBar />
      <Watermark />
    </div>
  );
}
